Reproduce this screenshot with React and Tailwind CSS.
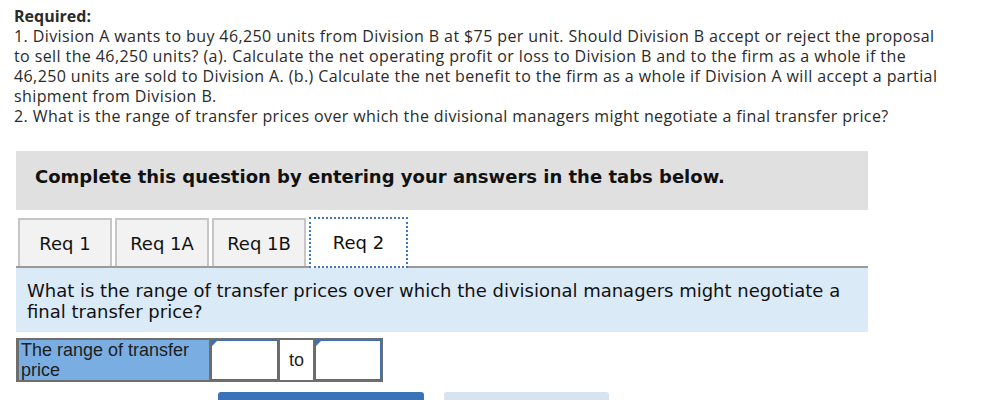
import React from "react";

function Tab({ label, active }) {
  if (active) {
    return (
      <div className="w-[99px] h-[51px] -mt-[1px] -mb-[2px] bg-white border-2 border-dotted border-[#3f78bf] flex items-center justify-center text-[18px] text-[#111] relative z-10 [font-family:'DejaVu_Sans',Verdana,sans-serif]">
        {label}
      </div>
    );
  }
  return (
    <div className="w-[94px] h-[48px] bg-[#f2f2f2] border-2 border-b-0 border-[#c6c6c6] flex items-center justify-center text-[18px] text-[#111] [font-family:'DejaVu_Sans',Verdana,sans-serif]">
      {label}
    </div>
  );
}

function InputCell({ wide }) {
  return (
    <div className={`${wide ? "w-[67px]" : "w-[66px]"} h-[40px] bg-white border border-[#3d6fb2] relative`}>
      <div className="absolute left-0 top-0 w-0 h-0 border-t-[5px] border-t-[#3d6fb2] border-r-[5px] border-r-transparent" />
    </div>
  );
}

export default function App() {
  return (
    <div className="w-[990px] h-[400px] bg-white overflow-hidden">
      <div className="pl-[14px] pt-[6px] w-[942px] text-[16px] leading-[20px] tracking-[0.4px] text-[#2a2a2a] [font-family:'Open_Sans',sans-serif]">
        <p className="font-bold tracking-normal">Required:</p>
        <p>
          1. Division A wants to buy 46,250 units from Division B at $75 per unit. Should Division B accept or reject the proposal to sell the 46,250 units? (a). Calculate the net operating profit or loss to Division B and to the firm as a whole if the 46,250 units are sold to Division A. (b.) Calculate the net benefit to the firm as a whole if Division A will accept a partial shipment from Division B.
        </p>
        <p>2. What is the range of transfer prices over which the divisional managers might negotiate a final transfer price?</p>
      </div>

      <div className="ml-[16px] w-[852px] mt-[25px]">
        <div className="h-[59px] bg-[#e0e0e0] pl-[19px] pt-[15px] text-[18px] leading-[22px] font-bold text-[#111] [font-family:'DejaVu_Sans',Verdana,sans-serif]">
          Complete this question by entering your answers in the tabs below.
        </div>

        <div className="mt-[8px] flex items-end gap-[3px] pl-[2px] border-b-2 border-[#9a9a9a] h-[50px]">
          <Tab label="Req 1" />
          <Tab label="Req 1A" />
          <Tab label="Req 1B" />
          <Tab label="Req 2" active />
        </div>

        <div className="h-[64px] bg-[#dbeaf7] pl-[11px] pt-[12px] text-[18px] leading-[21px] text-[#111] [font-family:'DejaVu_Sans',Verdana,sans-serif]">
          What is the range of transfer prices over which the divisional managers might negotiate a final transfer price?
        </div>

        <div className="mt-[6px] w-[367px] bg-[#6e6e6e] pl-[3px] pr-[2px] py-[2px] flex gap-[2px]">
          <div className="w-[190px] h-[40px] bg-[#7aaee2] pl-[2px] text-[18px] leading-[20px] text-[#1e1e1e] [font-family:'Liberation_Sans',Arial,sans-serif]">
            The range of transfer price
          </div>
          <InputCell wide />
          <div className="w-[33px] h-[40px] bg-white flex items-center justify-center text-[18px] text-[#1e1e1e] [font-family:'Liberation_Sans',Arial,sans-serif]">
            to
          </div>
          <InputCell />
        </div>

        <div className="mt-[10px] flex gap-[20px] pl-[202px]">
          <div className="w-[206px] h-[44px] bg-[#3b73b9] rounded-t-[3px] flex items-center justify-center text-white text-[18px] [font-family:'DejaVu_Sans',Verdana,sans-serif]">
            &lt; Req 1B
          </div>
          <div className="w-[165px] h-[44px] bg-[#d7e3f0] rounded-t-[3px] flex items-center justify-center text-white text-[18px] [font-family:'DejaVu_Sans',Verdana,sans-serif]">
            Req 2 &gt;
          </div>
        </div>
      </div>
    </div>
  );
}
